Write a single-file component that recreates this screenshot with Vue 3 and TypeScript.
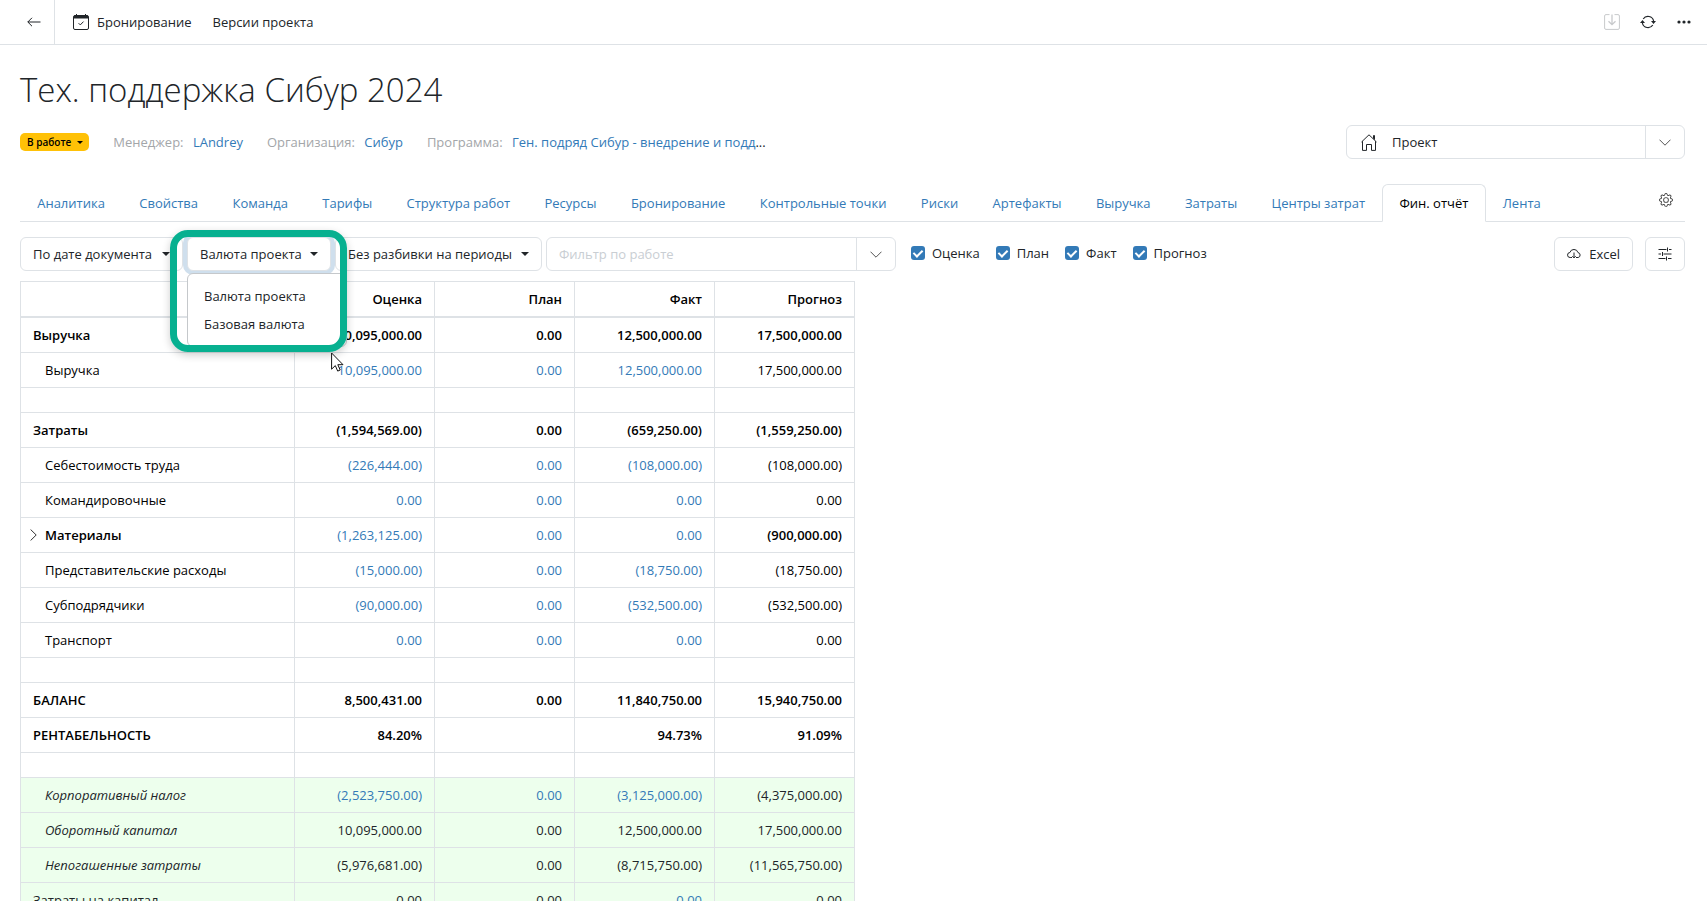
<script setup lang="ts">
import { ref } from 'vue'

interface Row {
  label?: string
  kind?: 'total' | 'group' | 'spacer' | 'note' | 'noteTotal'
  values?: string[]
  links?: number
}

const tabs = [
  'Аналитика', 'Свойства', 'Команда', 'Тарифы', 'Структура работ', 'Ресурсы', 'Бронирование',
  'Контрольные точки', 'Риски', 'Артефакты', 'Выручка', 'Затраты', 'Центры затрат', 'Фин. отчёт', 'Лента',
]
const activeTab = ref('Фин. отчёт')

const columns = ref([
  { name: 'Оценка', shown: true },
  { name: 'План', shown: true },
  { name: 'Факт', shown: true },
  { name: 'Прогноз', shown: true },
])

const menuOpen = ref(true)
const currency = ref('Валюта проекта')
const currencies = ['Валюта проекта', 'Базовая валюта']
function pick(c: string) {
  currency.value = c
  menuOpen.value = false
}

const rows: Row[] = [
  { label: 'Выручка', kind: 'total', values: ['10,095,000.00', '0.00', '12,500,000.00', '17,500,000.00'] },
  { label: 'Выручка', values: ['10,095,000.00', '0.00', '12,500,000.00', '17,500,000.00'], links: 3 },
  { kind: 'spacer' },
  { label: 'Затраты', kind: 'total', values: ['(1,594,569.00)', '0.00', '(659,250.00)', '(1,559,250.00)'] },
  { label: 'Себестоимость труда', values: ['(226,444.00)', '0.00', '(108,000.00)', '(108,000.00)'], links: 3 },
  { label: 'Командировочные', values: ['0.00', '0.00', '0.00', '0.00'], links: 3 },
  { label: 'Материалы', kind: 'group', values: ['(1,263,125.00)', '0.00', '0.00', '(900,000.00)'], links: 3 },
  { label: 'Представительские расходы', values: ['(15,000.00)', '0.00', '(18,750.00)', '(18,750.00)'], links: 3 },
  { label: 'Субподрядчики', values: ['(90,000.00)', '0.00', '(532,500.00)', '(532,500.00)'], links: 3 },
  { label: 'Транспорт', values: ['0.00', '0.00', '0.00', '0.00'], links: 3 },
  { kind: 'spacer' },
  { label: 'БАЛАНС', kind: 'total', values: ['8,500,431.00', '0.00', '11,840,750.00', '15,940,750.00'] },
  { label: 'РЕНТАБЕЛЬНОСТЬ', kind: 'total', values: ['84.20%', '', '94.73%', '91.09%'] },
  { kind: 'spacer' },
  { label: 'Корпоративный налог', kind: 'note', values: ['(2,523,750.00)', '0.00', '(3,125,000.00)', '(4,375,000.00)'], links: 3 },
  { label: 'Оборотный капитал', kind: 'note', values: ['10,095,000.00', '0.00', '12,500,000.00', '17,500,000.00'] },
  { label: 'Непогашенные затраты', kind: 'note', values: ['(5,976,681.00)', '0.00', '(8,715,750.00)', '(11,565,750.00)'] },
  { label: 'Затраты на капитал', kind: 'noteTotal', values: ['0.00', '0.00', '0.00', '0.00'] },
]
function isLink(row: Row, i: number): boolean {
  return row.kind === 'noteTotal' ? i === 2 : i < (row.links ?? 0)
}
</script>

<template>
  <div class="page">
    <header class="topbar">
      <button class="back" aria-label="Назад">
        <svg width="14" height="10" viewBox="0 0 14 10"><path d="M13.5 5H.8M5 .8.8 5 5 9.2" /></svg>
      </button>
      <nav class="actions">
        <button class="action">
          <svg width="16" height="16" viewBox="0 0 16 16">
            <rect x=".5" y="1.5" width="15" height="14" rx="1.5" />
            <path d="M1 1.5h14v3H1z" fill="currentColor" stroke="none" />
            <path d="M3.5 0v2M12.5 0v2M5.6 9.2l1.7 1.7 3.2-3.3" />
          </svg>
          Бронирование
        </button>
        <button class="action">Версии проекта</button>
      </nav>
      <div class="tools">
        <button class="tool faded" aria-label="Сохранить" disabled>
          <svg width="16" height="16" viewBox="0 0 16 16">
            <path d="M5.5.6H2A1.4 1.4 0 0 0 .6 2v12A1.4 1.4 0 0 0 2 15.4h12a1.4 1.4 0 0 0 1.4-1.4V2A1.4 1.4 0 0 0 14 .6h-3.5" />
            <path d="M8 .5v10M4.5 7.2 8 10.7l3.5-3.5" stroke-width="1.3" />
          </svg>
        </button>
        <button class="tool" aria-label="Обновить">
          <svg width="16" height="16" viewBox="0 0 16 16">
            <path d="M3.2 5A5.7 5.7 0 0 1 13.6 7M12.8 11A5.7 5.7 0 0 1 2.4 9" stroke-width="1.2" />
            <path d="M11 7h5l-2.5 3zM0 9h5L2.5 6z" fill="currentColor" stroke="none" />
          </svg>
        </button>
        <button class="tool" aria-label="Ещё">
          <svg width="16" height="16" viewBox="0 0 16 16" class="solid">
            <circle cx="3" cy="8" r="1.6" /><circle cx="8" cy="8" r="1.6" /><circle cx="13" cy="8" r="1.6" />
          </svg>
        </button>
      </div>
    </header>

    <main class="content">
      <h1>Тех. поддержка Сибур 2024</h1>

      <div class="meta">
        <button class="status">В работе <i class="caret small"></i></button>
        <span class="field">Менеджер: <a href="#">LAndrey</a></span>
        <span class="field">Организация: <a href="#">Сибур</a></span>
        <span class="field">Программа: <span class="program"><a href="#">Ген. подряд Сибур - внедрение и подд</a>...</span></span>
        <div class="combo scope">
          <button class="combo-value">
            <svg width="16" height="17" viewBox="0 0 16 17">
              <path d="M.5 8 8 .8 15.5 8M1.5 7.2v9.200h4v-5.900h5v5.900h4V7.200M12.500 4.800V1.500h1v4.200" />
            </svg>
            Проект
          </button>
          <button class="combo-arrow" aria-label="Открыть список">
            <svg width="12" height="7" viewBox="0 0 12 7"><path d="M.5.7 6 6.200 11.500.7" /></svg>
          </button>
        </div>
      </div>

      <div class="tabbar">
        <nav class="tabs">
          <a v-for="t in tabs" :key="t" href="#" class="tab" :class="{ active: t === activeTab }" @click.prevent="activeTab = t">{{ t }}</a>
        </nav>
        <button class="gear" aria-label="Настройки">
          <svg width="14" height="14" viewBox="0 0 16 16" class="solid">
            <path d="M8 4.754a3.246 3.246 0 1 0 0 6.492 3.246 3.246 0 0 0 0-6.492zM5.754 8a2.246 2.246 0 1 1 4.492 0 2.246 2.246 0 0 1-4.492 0z" />
            <path d="M9.796 1.343c-.527-1.790-3.065-1.790-3.592 0l-.094.319a.873.873 0 0 1-1.255.520l-.292-.160c-1.640-.892-3.433.902-2.540 2.541l.159.292a.873.873 0 0 1-.520 1.255l-.319.094c-1.790.527-1.790 3.065 0 3.592l.319.094a.873.873 0 0 1 .520 1.255l-.160.292c-.892 1.640.901 3.434 2.541 2.540l.292-.159a.873.873 0 0 1 1.255.520l.094.319c.527 1.790 3.065 1.790 3.592 0l.094-.319a.873.873 0 0 1 1.255-.520l.292.160c1.640.893 3.434-.902 2.540-2.541l-.159-.292a.873.873 0 0 1 .520-1.255l.319-.094c1.790-.527 1.790-3.065 0-3.592l-.319-.094a.873.873 0 0 1-.520-1.255l.160-.292c.893-1.640-.902-3.433-2.541-2.540l-.292.159a.873.873 0 0 1-1.255-.520l-.094-.319zm-2.633.283c.246-.835 1.428-.835 1.674 0l.094.319a1.873 1.873 0 0 0 2.693 1.115l.291-.160c.764-.415 1.600.420 1.184 1.185l-.159.292a1.873 1.873 0 0 0 1.116 2.692l.318.094c.835.246.835 1.428 0 1.674l-.319.094a1.873 1.873 0 0 0-1.115 2.693l.160.291c.415.764-.420 1.600-1.185 1.184l-.291-.159a1.873 1.873 0 0 0-2.693 1.116l-.094.318c-.246.835-1.428.835-1.674 0l-.094-.319a1.873 1.873 0 0 0-2.692-1.115l-.292.160c-.764.415-1.600-.420-1.184-1.185l.159-.291A1.873 1.873 0 0 0 1.945 8.930l-.319-.094c-.835-.246-.835-1.428 0-1.674l.319-.094A1.873 1.873 0 0 0 3.060 4.377l-.160-.292c-.415-.764.420-1.600 1.185-1.184l.292.159a1.873 1.873 0 0 0 2.692-1.115l.094-.319z" />
          </svg>
        </button>
      </div>

      <div class="toolbar">
        <button class="btn date">По дате документа <i class="caret"></i></button>
        <div class="dropdown">
          <button class="btn focused" aria-haspopup="true" :aria-expanded="menuOpen" @click="menuOpen = !menuOpen">
            {{ currency }} <i class="caret"></i>
          </button>
          <div v-if="menuOpen" class="menu">
            <button v-for="c in currencies" :key="c" class="menu-item" @click="pick(c)">{{ c }}</button>
          </div>
          <div class="highlight"></div>
          <svg class="pointer" width="13" height="20" viewBox="0 0 13 20">
            <path d="M.6 1v16.200l3.700-3.600 2.400 5.500 2.500-1.100-2.400-5.300h5.200z" />
          </svg>
        </div>
        <button class="btn periods">Без разбивки на периоды <i class="caret"></i></button>
        <div class="combo filter">
          <input type="text" placeholder="Фильтр по работе" aria-label="Фильтр по работе" />
          <button class="combo-arrow" aria-label="Открыть список">
            <svg width="12" height="7" viewBox="0 0 12 7"><path d="M.5.7 6 6.200 11.500.7" /></svg>
          </button>
        </div>
        <div class="checks">
          <label v-for="c in columns" :key="c.name"><input v-model="c.shown" type="checkbox" />{{ c.name }}</label>
        </div>
        <div class="right">
          <button class="btn excel">
            <svg width="14" height="14" viewBox="0 0 14 14">
              <path d="M5 10.500H3.200A2.500 2.500 0 0 1 2.900 5.500 4.200 4.200 0 0 1 11 5.600a2.500 2.500 0 0 1 .2 4.900H9M7 5.500v5.300M5.300 9.200 7 10.900l1.700-1.700" />
            </svg>
            Excel
          </button>
          <button class="btn sliders" aria-label="Параметры">
            <svg width="14" height="14" viewBox="0 0 14 14">
              <path d="M.5 2.500h8M11 2.500h2.500M9.500.5v4M.5 7H3M5.500 7h8M4.500 5v4M.5 11.500h7M10 11.500h3.500M8.500 9.500v4" />
            </svg>
          </button>
        </div>
      </div>

      <table>
        <colgroup>
          <col class="name-col" />
          <col v-for="c in columns" :key="c.name" class="value-col" />
        </colgroup>
        <thead>
          <tr>
            <th></th>
            <th v-for="c in columns" :key="c.name" scope="col">{{ c.name }}</th>
          </tr>
        </thead>
        <tbody>
          <tr v-for="(row, r) in rows" :key="r" :class="row.kind">
            <td class="name">
              <button v-if="row.kind === 'group'" class="expand" aria-label="Развернуть">
                <svg width="7" height="12" viewBox="0 0 7 12"><path d="M.6.500 6.200 6 .6 11.500" /></svg>
              </button>{{ row.label }}
            </td>
            <td v-for="i in 4" :key="i" :class="{ strong: row.kind === 'group' && i === 4 }">
              <a v-if="isLink(row, i - 1)" href="#">{{ row.values?.[i - 1] }}</a>
              <template v-else>{{ row.values?.[i - 1] }}</template>
            </td>
          </tr>
        </tbody>
      </table>
    </main>
  </div>
</template>

<style>
body { margin: 0; background: #fff; }
</style>

<style scoped>
.page {
  height: 100vh;
  overflow: hidden;
  display: flex;
  flex-direction: column;
  font: 13px/20px "Open Sans", "Noto Sans", sans-serif;
  color: #212529;
}
.page * { box-sizing: border-box; }
button, input { font: inherit; color: inherit; margin: 0; }
button { background: none; border: 0; padding: 0; white-space: nowrap; cursor: pointer; }
a { color: #337ab7; text-decoration: none; }
svg { fill: none; stroke: currentColor; stroke-width: 1; flex: none; }
svg.solid { fill: currentColor; stroke: none; }

.topbar { display: flex; flex: none; height: 45px; border-bottom: 1px solid #dee2e6; }
.back { width: 55px; padding-left: 14px; border-right: 1px solid #dee2e6; display: flex; align-items: center; justify-content: center; }
.actions { display: flex; gap: 21px; padding-left: 18px; }
.action { display: flex; align-items: center; gap: 8px; }
.tools { margin-left: auto; display: flex; gap: 20px; padding-right: 15px; }
.tool { display: flex; align-items: center; }
.faded { color: #c8cacc; }

.content { flex: 1; min-height: 0; padding: 0 22px 0 20px; }
h1 { margin: 20px 0 0; font-size: 33px; line-height: 50px; font-weight: 300; }
.meta { display: flex; align-items: center; margin-top: 10px; height: 34px; color: #a3a6a9; }
.status {
  display: flex; align-items: center; gap: 6px; height: 18px; padding: 0 6px 0 7px; margin-right: 24px;
  border-radius: 5px; background: #ffc107; color: #000; font-size: 10px; font-weight: 600;
}
.field { margin-right: 24px; white-space: nowrap; }
.field a { margin-left: 6px; }
.program { color: #212529; }
.caret { border: 4px solid transparent; border-top-color: currentColor; border-bottom: 0; }
.caret.small { border-width: 3px; border-bottom: 0; }

.combo { display: flex; height: 34px; border: 1px solid #dee2e6; border-radius: 6px; background: #fff; }
.scope { width: 339px; margin-left: auto; color: #212529; }
.combo-value { flex: 1; display: flex; align-items: center; gap: 15px; padding-left: 14px; }
.combo-arrow { width: 39px; border-left: 1px solid #dee2e6; display: flex; align-items: center; justify-content: center; color: #555; }

.tabbar { display: flex; justify-content: space-between; margin-top: 25px; height: 38px; border-bottom: 1px solid #dee2e6; }
.tabs { display: flex; flex: 0 1 1538px; height: 38px; }
.tab { flex: 1 0 auto; text-align: center; padding: 8px 16px 0; border: 1px solid transparent; border-radius: 6px 6px 0 0; white-space: nowrap; }
.tab.active { color: #000; background: #fff; border-color: #dee2e6 #dee2e6 #fff; }
.gear { width: 38px; height: 32px; display: flex; align-items: center; justify-content: center; color: #444; }

.toolbar { display: flex; align-items: center; gap: 4px; margin-top: 15px; }
.btn {
  height: 34px; display: flex; align-items: center; justify-content: space-between; gap: 8px; padding: 0 12px;
  border: 1px solid #dee2e6; border-radius: 6px; background: #fff;
}
.date { min-width: 163px; }
.periods { min-width: 207px; }
.dropdown { position: relative; }
.btn.focused { min-width: 144px; box-shadow: 0 0 0 4px #cfdfed; }
.menu {
  position: absolute; z-index: 2; top: 36px; left: 0; width: 160px; padding: 8px 0;
  border: 1px solid #c5c8cb; border-radius: 6px; background: #fff; display: flex; flex-direction: column;
}
.menu-item { height: 28px; padding: 0 16px; text-align: left; }
.highlight {
  position: absolute; z-index: 3; top: -7px; left: -17px; width: 177px; height: 122px; pointer-events: none;
  border: 7px solid #07b090; border-radius: 18px; box-shadow: 0 3px 8px rgba(0, 0, 0, .2);
}
.pointer { position: absolute; z-index: 4; top: 115px; left: 144px; fill: #fff; stroke: #111; }
.filter { width: 350px; }
.filter input { flex: 1; min-width: 0; padding: 0 12px; border: 0; background: none; outline: 0; }
.filter input::placeholder { color: #c9ced3; opacity: 1; }
.checks { display: flex; gap: 16px; margin: 0 0 2px 11px; }
.checks label { display: flex; align-items: center; gap: 7px; }
.checks input {
  appearance: none; width: 14px; height: 14px; border-radius: 3px; background: #337ab7;
  display: flex; justify-content: center; align-items: center;
}
.checks input:checked::before {
  content: ""; width: 4px; height: 7px; margin-bottom: 2px;
  border: solid #fff; border-width: 0 2px 2px 0; transform: rotate(45deg);
}
.right { display: flex; gap: 12px; margin-left: auto; }

table {
  margin-top: 10px; width: 835px; table-layout: fixed; border-collapse: separate; border-spacing: 0;
  border: solid #dee2e6; border-width: 1px 0 0 1px; color: #000;
}
.name-col { width: 274px; }
.value-col { width: 140px; }
th, td { height: 35px; padding: 0 12px; border: solid #dee2e6; border-width: 0 1px 1px 0; text-align: right; font-weight: 400; }
th { height: 36px; border-bottom-width: 2px; font-weight: 600; }
.name { padding-left: 24px; text-align: left; }
.total td, .group .name, .strong { font-weight: 600; }
.total .name, .noteTotal .name { padding-left: 12px; }
.spacer td { height: 25px; }
.note td, .noteTotal td { background: #edffed; color: #212529; }
.note .name { font-style: italic; }
.expand { width: 15px; height: 20px; margin-left: -15px; vertical-align: top; display: inline-flex; align-items: center; color: #333; }
</style>
